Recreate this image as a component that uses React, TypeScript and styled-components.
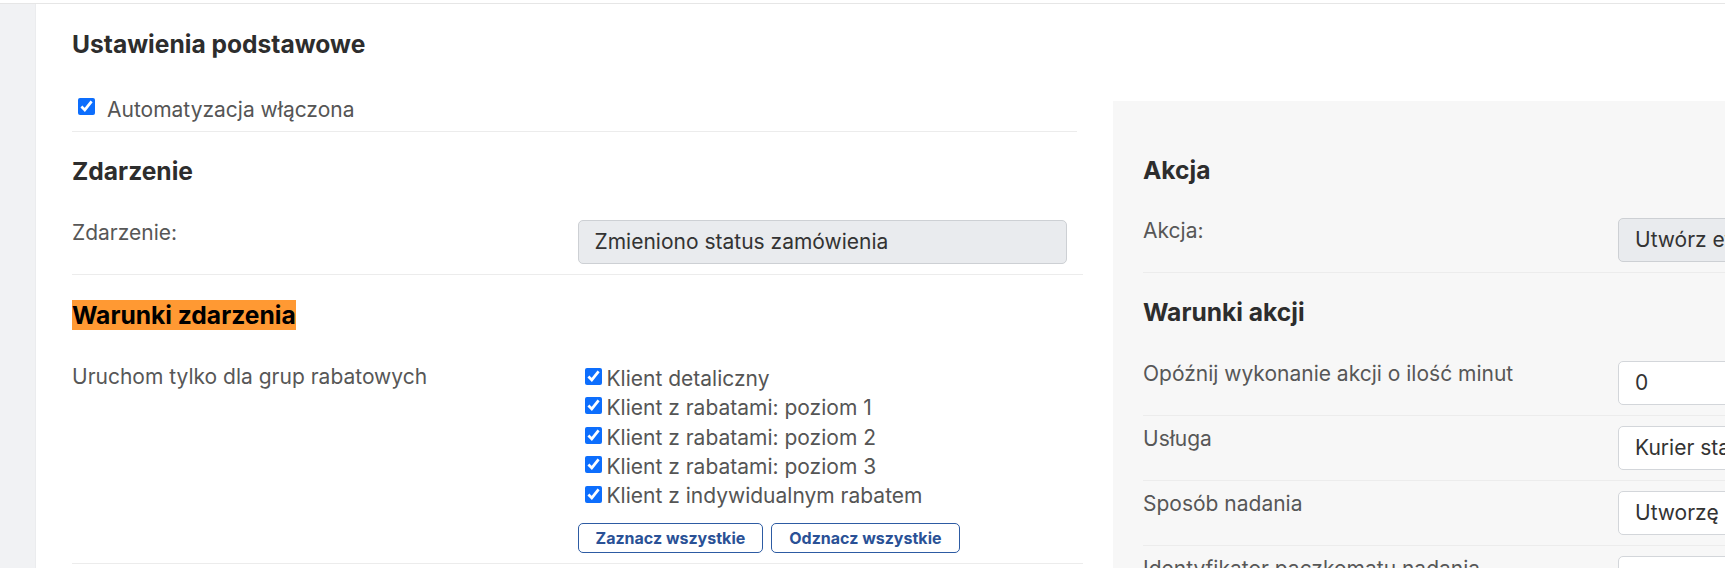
import styled, { createGlobalStyle } from 'styled-components'

const GlobalStyle = createGlobalStyle`
  html, body {
    margin: 0;
    padding: 0;
    background: #fff;
    overflow: hidden;
  }

  body {
    font-family: Inter, 'Noto Sans', 'Liberation Sans', sans-serif;
    color: #333;
  }
`

const Shell = styled.div`
  padding-top: 3px;
  height: 100vh;
  box-sizing: border-box;
`

const Frame = styled.div`
  display: flex;
  height: 100%;
  border-top: 1px solid #e6e6e6;
`

const Strip = styled.aside`
  flex: 0 0 36px;
  box-sizing: border-box;
  background: #f1f2f4;
  border-right: 1px solid #ebecee;
`

const Main = styled.main`
  display: flex;
  align-items: flex-start;
  gap: 30px;
  padding: 26px 0 0 36px;
`

const LeftColumn = styled.section`
  flex: 0 0 1011px;
`

const ActionPanel = styled.section`
  flex: 0 0 1010px;
  box-sizing: border-box;
  margin-top: 71px;
  min-height: 600px;
  padding: 55px 30px 0;
  background: #f7f7f7;
`

const Heading = styled.h4<{ $highlight?: boolean; $first?: boolean }>`
  margin: ${({ $first }) => ($first ? '0' : '25px')} 0 ${({ $first }) => ($first ? '23px' : '24px')};
  font-size: 24.6px;
  line-height: 28.8px;
  font-weight: 700;
  color: #2d2d2d;

  ${({ $highlight }) =>
    $highlight &&
    `
    display: inline-block;
    line-height: 30px;
    background: #ff9933;
    color: #000;
  `}
`

const Block = styled.div`
  display: flex;
  flex-direction: column;
  align-items: flex-start;
`

const CheckRow = styled.label`
  display: flex;
  align-items: flex-start;
  gap: 12px;
  margin-right: 6px;
  padding: 15px 0 9px 6px;
  border-bottom: 1px solid #ececec;
  font-size: 21px;
  line-height: 1.2;
  color: #555;
  align-self: stretch;

  input {
    margin-top: 1px;
  }
`

const Check = styled.input.attrs({ type: 'checkbox' })`
  width: 17px;
  height: 17px;
  margin: 0;
  flex: 0 0 17px;
  accent-color: #0d6efd;
`

const FieldRow = styled.div`
  display: grid;
  grid-template-columns: 1fr 1fr;
  align-items: start;
  padding: 10px 0;
  border-bottom: 1px solid #ececec;
  align-self: stretch;
`

const Label = styled.div`
  font-size: 21px;
  line-height: 1.2;
  color: #575757;
`

const Control = styled.div`
  padding-right: 16px;
`

const Field = styled.div<{ $disabled?: boolean }>`
  display: flex;
  align-items: center;
  height: 44px;
  box-sizing: border-box;
  padding: 0 16px;
  border: 1px solid ${({ $disabled }) => ($disabled ? '#cdd0d4' : '#d3d6da')};
  border-radius: 5px;
  background: ${({ $disabled }) => ($disabled ? '#e9ebee' : '#fff')};
  font-size: 21px;
  color: #333;
  white-space: nowrap;
  overflow: hidden;
`

const CheckList = styled.div`
  display: flex;
  flex-direction: column;
  padding-left: 7px;
`

const CheckItem = styled.label`
  display: flex;
  align-items: center;
  gap: 5px;
  font-size: 21px;
  line-height: 29.4px;
  color: #555;

  ${Check} {
    margin-top: -4px;
  }
`

const ButtonBar = styled.div`
  display: flex;
  gap: 8px;
  margin-top: 12px;
`

const OutlineButton = styled.button`
  height: 30px;
  padding: 0 17px;
  border: 1px solid #2d5ba3;
  border-radius: 5px;
  background: #fff;
  color: #2a5196;
  font-family: Inter, 'Liberation Sans', sans-serif;
  font-size: 16px;
  font-weight: 700;
  cursor: pointer;
`

const groups = [
  'Klient detaliczny',
  'Klient z rabatami: poziom 1',
  'Klient z rabatami: poziom 2',
  'Klient z rabatami: poziom 3',
  'Klient z indywidualnym rabatem',
]

const actionFields = [
  { label: 'Opóźnij wykonanie akcji o ilość minut', value: '0' },
  { label: 'Usługa', value: 'Kurier standardowy' },
  { label: 'Sposób nadania', value: 'Utworzę przesyłkę w paczkomacie' },
  { label: 'Identyfikator paczkomatu nadania', value: '' },
]

const App = (): JSX.Element => {
  return (
    <>
      <GlobalStyle />
      <Shell>
        <Frame>
          <Strip />
          <Main>
            <LeftColumn>
              <Block>
                <Heading $first>Ustawienia podstawowe</Heading>
                <CheckRow>
                  <Check defaultChecked />
                  Automatyzacja włączona
                </CheckRow>

                <Heading>Zdarzenie</Heading>
                <FieldRow>
                  <Label>Zdarzenie:</Label>
                  <Control>
                    <Field $disabled>Zmieniono status zamówienia</Field>
                  </Control>
                </FieldRow>

                <Heading $highlight>Warunki zdarzenia</Heading>
                <FieldRow>
                  <Label>Uruchom tylko dla grup rabatowych</Label>
                  <Control>
                    <CheckList>
                      {groups.map((g) => (
                        <CheckItem key={g}>
                          <Check defaultChecked />
                          {g}
                        </CheckItem>
                      ))}
                    </CheckList>
                    <ButtonBar>
                      <OutlineButton type='button'>Zaznacz wszystkie</OutlineButton>
                      <OutlineButton type='button'>Odznacz wszystkie</OutlineButton>
                    </ButtonBar>
                  </Control>
                </FieldRow>
              </Block>
            </LeftColumn>

            <ActionPanel>
              <Block>
                <Heading $first>Akcja</Heading>
                <FieldRow>
                  <Label>Akcja:</Label>
                  <Control>
                    <Field $disabled>Utwórz etykietę wysyłkową</Field>
                  </Control>
                </FieldRow>

                <Heading>Warunki akcji</Heading>
                {actionFields.map((f) => (
                  <FieldRow key={f.label}>
                    <Label>{f.label}</Label>
                    <Control>
                      <Field>{f.value}</Field>
                    </Control>
                  </FieldRow>
                ))}
              </Block>
            </ActionPanel>
          </Main>
        </Frame>
      </Shell>
    </>
  )
}

export default App
